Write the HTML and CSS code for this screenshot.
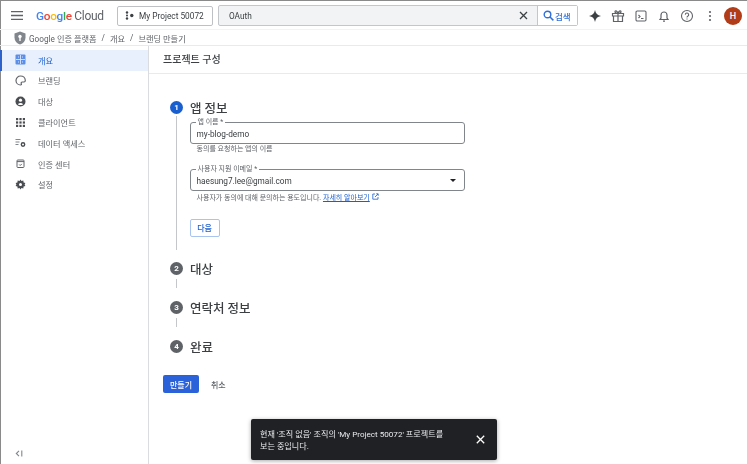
FILE: index.html
```html
<!DOCTYPE html>
<html lang="ko">
<head>
<meta charset="utf-8">
<title>프로젝트 구성</title>
<link rel="stylesheet" href="styles.css">
</head>
<body>
<div class="page">
  <header class="topbar">
    <button class="menu-btn" aria-label="메뉴">
      <svg width="12" height="9" viewBox="0 0 12 9"><path d="M0 .5h12M0 4.500h12M0 8.500h12" stroke="#5f6368" stroke-width="1.300"/></svg>
    </button>
    <div class="logo"><span class="g-blue">G</span><span class="g-red">o</span><span class="g-yellow">o</span><span class="g-blue">g</span><span class="g-green">l</span><span class="g-red">e</span> <span class="logo-cloud">Cloud</span></div>
    <button class="project-btn">
      <svg width="9" height="9" viewBox="0 0 9 9"><circle cx="2" cy="1.500" r="1.200" fill="#3c4043"/><circle cx="2" cy="7.500" r="1.200" fill="#3c4043"/><circle cx="6.800" cy="4.500" r="1.700" fill="#3c4043"/><circle cx="2" cy="4.500" r="1" fill="#3c4043"/></svg>
      <span>My Project 50072</span>
    </button>
    <div class="search">
      <span class="search-text">OAuth</span>
      <svg class="search-clear" width="9" height="9" viewBox="0 0 9 9"><path d="M1 1l7 7M8 1L1 8" stroke="#3c4043" stroke-width="1.300"/></svg>
      <button class="search-btn">
        <svg width="11" height="11" viewBox="0 0 11 11"><circle cx="4.500" cy="4.500" r="3.300" fill="none" stroke="#2f6fdc" stroke-width="1.400"/><path d="M7 7l3.400 3.400" stroke="#2f6fdc" stroke-width="1.500"/></svg>
        <span>검색</span>
      </button>
    </div>
    <div class="top-icons">
      <svg width="14" height="14" viewBox="0 0 14 14"><path d="M7 1c.6 3.600 2.400 5.400 6 6-3.600.6-5.400 2.400-6 6-.6-3.600-2.400-5.400-6-6 3.600-.6 5.400-2.400 6-6z" fill="#3c4043"/></svg>
      <svg width="14" height="14" viewBox="0 0 14 14" fill="none" stroke="#5f6368" stroke-width="1.200"><path d="M1.500 4.500h11v2.500h-11zM2.500 7v5.500h9V7M7 4.500v8M7 4.500C5 4.500 4 3.800 4 2.800 4 1.500 6 1.200 7 4.500c1-3.300 3-3 3-1.700 0 1-1 1.700-3 1.700z"/></svg>
      <svg width="14" height="14" viewBox="0 0 14 14" fill="none" stroke="#5f6368" stroke-width="1.100"><rect x="2" y="2" width="10" height="10" rx="1.200"/><path d="M4.500 6l1.500 1.500L4.500 9M7 9.500h2.500"/></svg>
      <svg width="14" height="14" viewBox="0 0 14 14" fill="none" stroke="#5f6368" stroke-width="1.200"><path d="M3 10.500h8l-1-1.500V6a3 3 0 0 0-6 0v3z"/><path d="M6 12.200h2"/></svg>
      <svg width="14" height="14" viewBox="0 0 14 14" fill="none" stroke="#5f6368" stroke-width="1.100"><circle cx="7" cy="7" r="5.500"/><path d="M5.300 5.600A1.700 1.700 0 1 1 7.700 7.300c-.5.300-.7.600-.7 1.100"/><path d="M7 9.600v1"/></svg>
      <svg width="14" height="14" viewBox="0 0 14 14"><circle cx="7" cy="3" r="1.100" fill="#5f6368"/><circle cx="7" cy="7" r="1.100" fill="#5f6368"/><circle cx="7" cy="11" r="1.100" fill="#5f6368"/></svg>
      <div class="avatar">H</div>
    </div>
  </header>

  <nav class="crumbs">
    <svg width="12" height="14" viewBox="0 0 12 14"><path d="M6 .5l5.500 2v4.200c0 3.200-2.300 5.600-5.500 6.800C2.800 12.300.5 9.900.5 6.700V2.500z" fill="#80868b"/><circle cx="6" cy="5.500" r="1.700" fill="#fff"/><path d="M5.300 6.500h1.400v3.500H5.300z" fill="#fff"/></svg>
    <span>Google 인증 플랫폼</span><span>/</span><span>개요</span><span>/</span><span>브랜딩 만들기</span>
  </nav>

  <div class="body">
    <aside class="sidebar">
      <ul class="nav">
        <li class="nav-item active">
          <svg width="11" height="11" viewBox="0 0 11 11"><rect x=".5" y=".5" width="10" height="10" rx="1" fill="#5b8ee6"/><path d="M5.500 1v9M1 5.500h9M3 3h1M7 3h1M3 8h1M7 8h1" stroke="#dce8fc" stroke-width=".9"/></svg>
          <span>개요</span>
        </li>
        <li class="nav-item">
          <svg width="11" height="11" viewBox="0 0 11 11" fill="none" stroke="#5f6368" stroke-width="1.200"><path d="M5.500 1a4.500 4.500 0 0 0 0 9c1 0 1.200-.8.800-1.400-.4-.7 0-1.600 1-1.600H9c.8 0 1.300-.6 1.300-1.500C10.300 2.800 8.200 1 5.500 1z"/></svg>
          <span>브랜딩</span>
        </li>
        <li class="nav-item">
          <svg width="11" height="11" viewBox="0 0 11 11"><circle cx="5.500" cy="5.500" r="5" fill="#4a4d51"/><circle cx="5.500" cy="4.200" r="1.600" fill="#fff"/><path d="M2.800 8.200c1.400-1.500 4-1.500 5.400 0-1.400 1.200-4 1.200-5.400 0z" fill="#fff"/></svg>
          <span>대상</span>
        </li>
        <li class="nav-item">
          <svg width="11" height="11" viewBox="0 0 11 11" fill="#4a4d51"><rect x="1" y="1" width="2.200" height="2.200"/><rect x="4.400" y="1" width="2.200" height="2.200"/><rect x="7.800" y="1" width="2.200" height="2.200"/><rect x="1" y="4.400" width="2.200" height="2.200"/><rect x="4.400" y="4.400" width="2.200" height="2.200"/><rect x="7.800" y="4.400" width="2.200" height="2.200"/><rect x="1" y="7.800" width="2.200" height="2.200"/><rect x="4.400" y="7.800" width="2.200" height="2.200"/><rect x="7.800" y="7.800" width="2.200" height="2.200"/></svg>
          <span>클라이언트</span>
        </li>
        <li class="nav-item">
          <svg width="11" height="11" viewBox="0 0 11 11"><path d="M.5 2.500h5M.5 5h4M.5 7.500h3" stroke="#80868b" stroke-width="1"/><circle cx="8" cy="7.500" r="1.700" fill="none" stroke="#4a4d51" stroke-width="1.400"/></svg>
          <span>데이터 액세스</span>
        </li>
        <li class="nav-item">
          <svg width="11" height="11" viewBox="0 0 11 11" fill="none" stroke="#5f6368" stroke-width="1"><rect x="2" y="2" width="7" height="7.500" rx=".8"/><path d="M2 3.600h7M4.200 6.500l1 1 1.600-1.600"/></svg>
          <span>인증 센터</span>
        </li>
        <li class="nav-item">
          <svg width="11" height="11" viewBox="0 0 11 11"><path d="M5.500 .5l1 1.500 1.800-.4.300 1.800 1.800.7-.8 1.400.8 1.400-1.800.7-.3 1.800-1.800-.4-1 1.500-1-1.500-1.800.4-.3-1.800L.6 6.900l.8-1.400L.6 4.100l1.800-.7.300-1.800 1.800.4z" fill="#4a4d51"/><circle cx="5.500" cy="5.500" r="1.500" fill="#fff"/></svg>
          <span>설정</span>
        </li>
      </ul>
      <div class="collapse">
        <svg width="8" height="7" viewBox="0 0 8 7" fill="none" stroke="#80868b" stroke-width="1.100"><path d="M4 .8L1.300 3.500 4 6.200M6.800 .5v6"/></svg>
      </div>
    </aside>

    <main class="main">
      <h1 class="page-title">프로젝트 구성</h1>
      <div class="content">
        <ol class="steps">
          <li class="step step-open">
            <div class="step-head"><span class="badge badge-on">1</span><h2>앱 정보</h2></div>
            <div class="step-body">
              <div class="field">
                <span class="field-label">앱 이름 *</span>
                <span class="field-value">my-blog-demo</span>
              </div>
              <p class="hint hint-1">동의를 요청하는 앱의 이름</p>
              <div class="field">
                <span class="field-label">사용자 지원 이메일 *</span>
                <span class="field-value">haesung7.lee@gmail.com</span>
                <span class="caret"></span>
              </div>
              <p class="hint hint-2">사용자가 동의에 대해 문의하는 용도입니다. <a href="#">자세히 알아보기</a>
                <svg width="7" height="7" viewBox="0 0 7 7" fill="none" stroke="#1a5fd0" stroke-width=".8"><path d="M3 1H.8v5.200H6V4M3 4l3-3M4.200 .8H6.200V2.800"/></svg>
              </p>
              <button class="btn-next">다음</button>
            </div>
          </li>
          <li class="step">
            <div class="step-head"><span class="badge">2</span><h2>대상</h2></div>
            <div class="step-body step-gap"></div>
          </li>
          <li class="step">
            <div class="step-head"><span class="badge">3</span><h2>연락처 정보</h2></div>
            <div class="step-body step-gap"></div>
          </li>
          <li class="step">
            <div class="step-head"><span class="badge">4</span><h2>완료</h2></div>
          </li>
        </ol>
        <div class="actions">
          <button class="btn-create">만들기</button>
          <button class="btn-cancel">취소</button>
        </div>
      </div>
    </main>
  </div>

  <div class="toast">
    <p>현재 '조직 없음' 조직의 'My Project 50072' 프로젝트를 보는 중입니다.</p>
    <svg width="9" height="9" viewBox="0 0 9 9"><path d="M.8.8l7.400 7.400M8.200.8L.8 8.200" stroke="#fff" stroke-width="1.300"/></svg>
  </div>
</div>
</body>
</html>
```

FILE: styles.css
```css
* { box-sizing: border-box; }
html, body { margin: 0; padding: 0; }
body {
  font-family: "Roboto", "Noto Sans CJK KR", sans-serif;
  color: #3c4043;
  background: #fff;
}
button { font-family: inherit; cursor: pointer; }
h1, h2, p, ul, ol { margin: 0; padding: 0; list-style: none; }

.page {
  position: relative;
  width: 747px;
  height: 464px;
  padding-top: 1px;
  overflow: hidden;
  display: flex;
  flex-direction: column;
  box-shadow: inset 1px 1px 0 #8a8a8a;
  filter: blur(0.45px);
}

.topbar {
  height: 29px;
  flex: none;
  display: flex;
  align-items: center;
  padding: 1px 5px 0 11px;
  border-bottom: 1px solid #f1f3f4;
}
.menu-btn {
  width: 12px;
  height: 9px;
  padding: 0;
  border: 0;
  background: none;
  display: flex;
  margin-right: 13px;
}
.logo {
  width: 81px;
  font-family: "Roboto", sans-serif;
  font-size: 11.800px;
  letter-spacing: -0.3px;
  white-space: nowrap;
  font-weight: 500;
}
.g-blue { color: #4285f4; }
.g-red { color: #ea4335; }
.g-yellow { color: #fbbc04; }
.g-green { color: #34a853; }
.logo-cloud { color: #5f6368; font-weight: 400; font-size: 12px; }
.project-btn {
  width: 96px;
  height: 20px;
  padding: 0 0 0 7px;
  display: flex;
  align-items: center;
  gap: 5px;
  background: #fff;
  border: 1px solid #bdc1c6;
  border-radius: 2px;
  font-size: 8.300px;
  color: #3c4043;
  white-space: nowrap;
}
.search {
  width: 360px;
  height: 21px;
  margin-left: 5px;
  display: flex;
  align-items: center;
  background: #f1f3f4;
  border: 1px solid #c4c7ca;
  border-radius: 2px;
}
.search-text {
  flex: 1;
  padding-left: 10px;
  font-size: 8.300px;
  color: #3c4043;
}
.search-clear { margin-right: 9px; }
.search-btn {
  width: 40px;
  height: 100%;
  padding: 0 0 0 5px;
  display: flex;
  align-items: center;
  gap: 1px;
  background: #fff;
  border: 0;
  border-left: 1px solid #c4c7ca;
  color: #2f6fdc;
  font-size: 8.500px;
  font-weight: 500;
}
.top-icons {
  flex: 1;
  display: flex;
  align-items: center;
  justify-content: flex-end;
  gap: 9px;
}
.avatar {
  width: 18px;
  height: 18px;
  margin-left: -2px;
  border-radius: 50%;
  background: #b23c17;
  color: #fff;
  font-size: 9px;
  font-weight: 500;
  display: flex;
  align-items: center;
  justify-content: center;
}

.crumbs {
  height: 16px;
  flex: none;
  display: flex;
  align-items: center;
  gap: 5px;
  padding-left: 14px;
  font-size: 8.200px;
  color: #5f6368;
  border-bottom: 1px solid #e8eaed;
}
.crumbs svg { margin-right: -2px; }

.body { flex: 1; display: flex; min-height: 0; }

.sidebar {
  width: 149px;
  flex: none;
  padding-top: 4px;
  display: flex;
  flex-direction: column;
  border-right: 1px solid #dadce0;
}
.nav { flex: 1; }
.nav-item {
  height: 20.800px;
  display: flex;
  align-items: center;
  gap: 12px;
  padding: 0 0 1.500px 15px;
  font-size: 8.200px;
  color: #5f6368;
}
.nav-item.active {
  background: #e8f0fe;
  color: #1a5fd0;
  border-left: 2px solid #2c62c9;
  padding-left: 13px;
}
.collapse { height: 22px; padding-left: 15px; }

.main { flex: 1; min-width: 0; display: flex; flex-direction: column; }
.page-title {
  height: 28px;
  flex: none;
  display: flex;
  align-items: center;
  padding: 0 0 2px 14px;
  font-size: 10px;
  font-weight: 500;
  color: #3c4043;
  border-bottom: 1px solid #e8eaed;
}
.content { padding: 26px 0 0 14px; }
.step-head {
  display: flex;
  align-items: center;
  height: 14px;
}
.badge {
  width: 13px;
  height: 13px;
  margin-left: 7px;
  flex: none;
  border-radius: 50%;
  background: #5f6368;
  color: #fff;
  font-size: 8px;
  font-weight: 700;
  display: flex;
  align-items: center;
  justify-content: center;
}
.badge-on { background: #1a5fd0; }
.step-head h2 {
  margin-left: 7px;
  font-size: 12.500px;
  font-weight: 500;
  color: #3c4043;
  white-space: nowrap;
}
.step-body {
  margin-left: 13px;
  padding-left: 12.500px;
  border-left: 1.500px solid #c4c7ca;
}
.step-open .step-body { height: 134px; margin-top: 2px; padding-top: 6px; }
.step-open { margin-bottom: 11px; }
.step-gap { height: 9px; margin-top: 4px; margin-bottom: 12px; }

.field {
  position: relative;
  width: 275px;
  height: 22px;
  padding-left: 6px;
  display: flex;
  align-items: center;
  border: 1px solid #80868b;
  border-radius: 3px;
}
.field-label {
  position: absolute;
  top: -5px;
  left: 5px;
  padding: 0 2px;
  background: #fff;
  font-size: 7px;
  line-height: 8px;
  color: #5f6368;
  white-space: nowrap;
}
.field-value {
  font-size: 8.250px;
  color: #3c4043;
  padding-top: 1px;
}
.caret {
  position: absolute;
  right: 8px;
  top: 9px;
  width: 0;
  height: 0;
  border: 3px solid transparent;
  border-top: 3px solid #202124;
  border-bottom: 0;
}
.hint {
  padding-left: 7px;
  font-size: 7px;
  line-height: 9px;
  color: #5f6368;
}
.hint-1 { margin: 1px 0 15px; }
.hint-2 { margin: 2px 0 13px; }
.hint a { color: #1a5fd0; text-decoration: underline; }
.btn-next {
  width: 30px;
  height: 18px;
  padding: 0;
  background: #fff;
  border: 1px solid #a8c4f0;
  border-radius: 2px;
  font-size: 8px;
  font-weight: 500;
  color: #1a5fd0;
}
.actions {
  margin-top: 22px;
  display: flex;
  align-items: center;
  gap: 12px;
}
.btn-create {
  width: 36px;
  height: 18px;
  padding: 0;
  background: #2c62d9;
  border: 0;
  border-radius: 2px;
  color: #fff;
  font-size: 8px;
  font-weight: 500;
}
.btn-cancel {
  padding: 0;
  background: none;
  border: 0;
  color: #5f6368;
  font-size: 8px;
  font-weight: 500;
}

.toast {
  position: absolute;
  left: 251px;
  top: 419px;
  width: 246px;
  height: 41px;
  padding: 0 12px 0 9px;
  display: flex;
  align-items: center;
  justify-content: space-between;
  background: #202124;
  border-radius: 2px;
  box-shadow: 0 1px 4px rgba(0,0,0,.35);
  color: #e8eaed;
  font-size: 8.100px;
  line-height: 12px;
}
.toast p { width: 192px; }
```
